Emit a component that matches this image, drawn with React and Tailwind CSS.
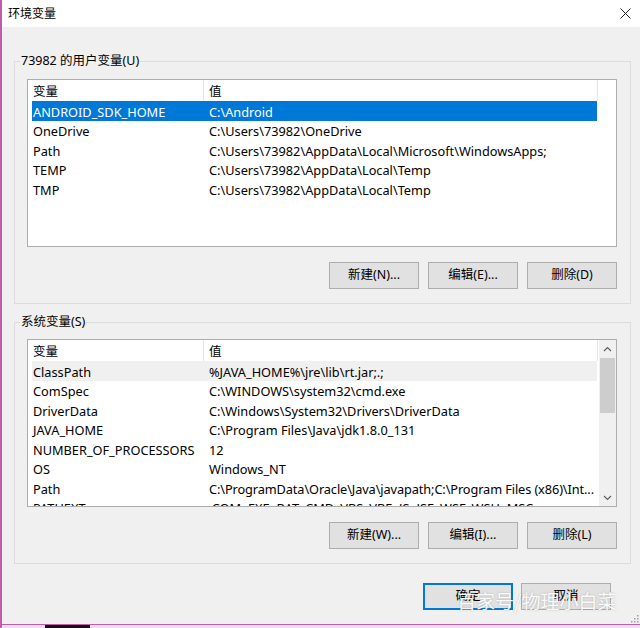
const userVars = [
  ["ANDROID_SDK_HOME", "C:\\Android"],
  ["OneDrive", "C:\\Users\\73982\\OneDrive"],
  ["Path", "C:\\Users\\73982\\AppData\\Local\\Microsoft\\WindowsApps;"],
  ["TEMP", "C:\\Users\\73982\\AppData\\Local\\Temp"],
  ["TMP", "C:\\Users\\73982\\AppData\\Local\\Temp"],
];

const systemVars = [
  ["ClassPath", "%JAVA_HOME%\\jre\\lib\\rt.jar;.;"],
  ["ComSpec", "C:\\WINDOWS\\system32\\cmd.exe"],
  ["DriverData", "C:\\Windows\\System32\\Drivers\\DriverData"],
  ["JAVA_HOME", "C:\\Program Files\\Java\\jdk1.8.0_131"],
  ["NUMBER_OF_PROCESSORS", "12"],
  ["OS", "Windows_NT"],
  ["Path", "C:\\ProgramData\\Oracle\\Java\\javapath;C:\\Program Files (x86)\\Int..."],
  ["PATHEXT", ".COM;.EXE;.BAT;.CMD;.VBS;.VBE;.JS;.JSE;.WSF;.WSH;.MSC"],
];

function WinButton({ children, primary = false }) {
  return (
    <button
      type="button"
      className={[
        "flex h-[27px] w-[90px] items-center justify-center bg-[#e1e1e1] text-[12.5px] text-black",
        primary ? "border-2 border-[#0078d7]" : "border border-[#adadad]",
      ].join(" ")}
    >
      {children}
    </button>
  );
}

function Header() {
  return (
    <div className="flex h-[21px] items-center pl-[4px] text-[12.5px] text-black">
      <div className="w-[171px] pl-[1px] pt-[3px]">变量</div>
      <div className="h-full w-px bg-[#e5e5e5]" />
      <div className="w-[393px] pl-[5px] pt-[3px]">值</div>
      <div className="h-full w-px bg-[#e5e5e5]" />
    </div>
  );
}

function Row({ name, value, state }) {
  const bg =
    state === "selected"
      ? "bg-[#0078d7] text-white"
      : state === "hover"
        ? "bg-[#f0f0f0] text-black"
        : "text-black";
  // long values get a hair less spacing so they fit like the native list
  const tight = value.length > 60 ? "tracking-[-0.1px]" : "";
  return (
    <div className={`flex h-[19.5px] w-[565px] items-center pt-[3px] text-[12.75px] ${bg}`}>
      <div className="w-[172px] shrink-0 whitespace-nowrap pl-[1px]">{name}</div>
      <div className={`min-w-0 flex-1 overflow-hidden whitespace-nowrap pl-[5px] ${tight}`}>
        {value}
      </div>
    </div>
  );
}

function Chevron({ up }) {
  return (
    <svg width="9" height="6" viewBox="0 0 9 6" className="block">
      <path
        d={up ? "M1 5 L4.5 1.5 L8 5" : "M1 1 L4.5 4.5 L8 1"}
        fill="none"
        stroke="#606060"
        strokeWidth="1.2"
      />
    </svg>
  );
}

function Group({ label, children, className = "" }) {
  return (
    <fieldset
      className={`ml-[12px] w-[617px] border border-[#dcdcdc] px-[12px] pb-[14px] ${className}`}
    >
      <legend className="ml-[-7px] px-[1px] text-[12.5px] leading-[18px] text-black">
        {label}
      </legend>
      {children}
    </fieldset>
  );
}

export default function App() {
  return (
    <div className="relative h-[628px] w-[640px] overflow-hidden border-l-2 border-[#c25ba8] bg-[#f0f0f0] font-['Noto_Sans','Noto_Sans_CJK_SC',sans-serif]">
      {/* title bar */}
      <div className="flex h-[27px] items-center justify-between bg-white pl-[6px] pr-[9px]">
        <span className="text-[12px] text-black">环境变量</span>
        <svg width="11" height="11" viewBox="0 0 11 11">
          <path d="M0.5 0.5 L10.5 10.5 M10.5 0.5 L0.5 10.5" stroke="#222" strokeWidth="1" />
        </svg>
      </div>

      <Group label="73982 的用户变量(U)" className="mt-[25px]">
        <div className="mt-[9px] h-[168px] w-[590px] border border-[#adadad] bg-white">
          <Header />
          <div className="pl-[4px]">
            {userVars.map(([n, v], i) => (
              <Row key={n} name={n} value={v} state={i === 0 ? "selected" : ""} />
            ))}
          </div>
        </div>
        <div className="mt-[15px] flex w-[590px] justify-end gap-[9px]">
          <WinButton>新建(N)...</WinButton>
          <WinButton>编辑(E)...</WinButton>
          <WinButton>删除(D)</WinButton>
        </div>
      </Group>

      <Group label="系统变量(S)" className="mt-[9px]">
        <div className="mt-[8px] flex h-[168px] w-[590px] border border-[#adadad] bg-white">
          <div className="min-w-0 flex-1 overflow-hidden">
            <Header />
            <div className="pl-[4px]">
              {systemVars.map(([n, v], i) => (
                <Row key={n} name={n} value={v} state={i === 0 ? "hover" : ""} />
              ))}
            </div>
          </div>
          <div className="flex w-[17px] flex-col bg-[#f0f0f0]">
            <div className="flex h-[17px] items-center justify-center">
              <Chevron up />
            </div>
            <div className="mx-[1px] mt-[1px] h-[55px] bg-[#cdcdcd]" />
            <div className="flex-1" />
            <div className="flex h-[17px] items-center justify-center">
              <Chevron />
            </div>
          </div>
        </div>
        <div className="mt-[15px] flex w-[590px] justify-end gap-[9px]">
          <WinButton>新建(W)...</WinButton>
          <WinButton>编辑(I)...</WinButton>
          <WinButton>删除(L)</WinButton>
        </div>
      </Group>

      <div className="mt-[19px] flex justify-end gap-[8px] pr-[29px]">
        <WinButton primary>确定</WinButton>
        <WinButton>取消</WinButton>
      </div>

      {/* resize grip */}
      <svg width="10" height="10" viewBox="0 0 10 10" className="absolute bottom-[5px] right-[1px]">
        {[
          [8, 2],
          [5, 5],
          [8, 5],
          [2, 8],
          [5, 8],
          [8, 8],
        ].map(([x, y]) => (
          <rect key={`${x}-${y}`} x={x} y={y} width="1.5" height="1.5" fill="#a0a0a0" />
        ))}
      </svg>

      {/* watermark */}
      <div className="absolute left-[455px] top-[589px] text-[19px] leading-[24px] text-white/95 [text-shadow:0_0_2px_rgba(0,0,0,0.25)] font-['Noto_Sans_CJK_SC',sans-serif]">
        百家号/物理小白菜
      </div>

      {/* bottom edge */}
      <div className="absolute bottom-0 left-0 right-0 h-[4px] border-t border-[#c25ba8] bg-[#e9e0e8]">
        <div className="ml-[43px] h-full w-[45px] bg-[#111]" />
      </div>
    </div>
  );
}
